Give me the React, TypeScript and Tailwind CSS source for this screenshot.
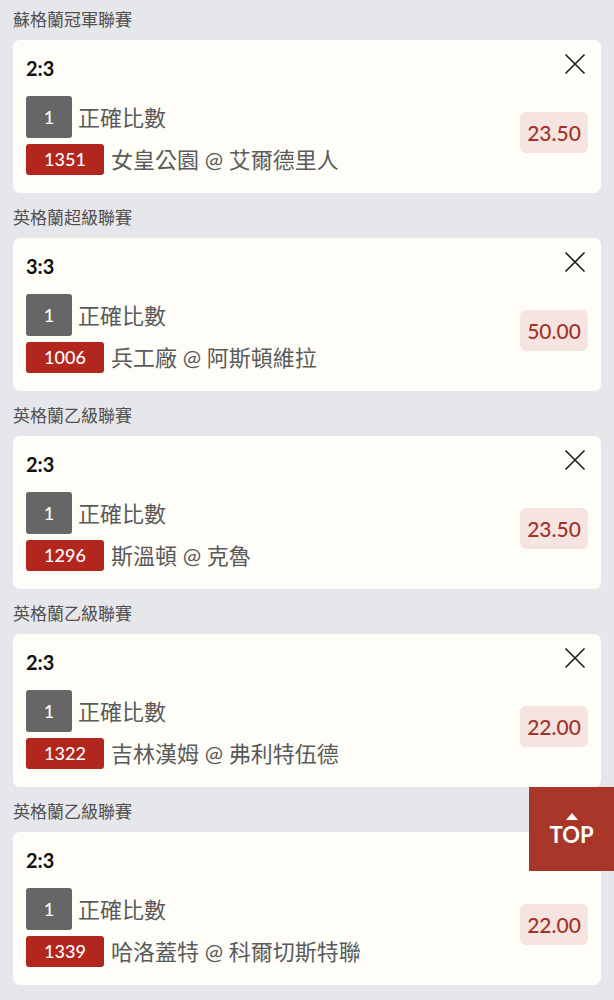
const bets = [
  { league: "蘇格蘭冠軍聯賽", score: "2:3", no: "1351", match: "女皇公園 @ 艾爾德里人", odds: "23.50", close: true },
  { league: "英格蘭超級聯賽", score: "3:3", no: "1006", match: "兵工廠 @ 阿斯頓維拉", odds: "50.00", close: true },
  { league: "英格蘭乙級聯賽", score: "2:3", no: "1296", match: "斯溫頓 @ 克魯", odds: "23.50", close: true },
  { league: "英格蘭乙級聯賽", score: "2:3", no: "1322", match: "吉林漢姆 @ 弗利特伍德", odds: "22.00", close: true },
  { league: "英格蘭乙級聯賽", score: "2:3", no: "1339", match: "哈洛蓋特 @ 科爾切斯特聯", odds: "22.00", close: true },
]

const font = { fontFamily: "Lato, 'Noto Sans CJK TC', sans-serif" }

const CloseIcon = () => (
  <svg width="20" height="20" viewBox="0 0 20 20" fill="none" stroke="#222" strokeWidth="1.7" strokeLinecap="round">
    <path d="M1 1 L19 19 M19 1 L1 19" />
  </svg>
)

const BetCard = ({ bet }: { bet: (typeof bets)[number] }) => (
  <div className="flex flex-col">
    <div className="h-[40px] pt-[10px] pl-[13px] text-[17px] leading-[20px] text-[#505050]">{bet.league}</div>
    <div className="mx-[13px] rounded-[7px] bg-[#fffdf7] px-[13px] pt-[14px] pb-[18px]">
      <div className="flex items-start justify-between">
        <span className="text-[20px] font-bold leading-[28px] text-[#111]">{bet.score}</span>
        {bet.close && (
          <span className="mr-[3px]">
            <CloseIcon />
          </span>
        )}
      </div>
      <div className="mt-[14px] flex items-center justify-between">
        <div className="flex flex-col gap-[6px]">
          <div className="flex items-center gap-[6px]">
            <span className="flex h-[42px] w-[46px] items-center justify-center rounded-[3px] bg-[#666666] text-[18px] font-medium text-white">
              1
            </span>
            <span className="text-[22px] text-[#5a5a5a]">正確比數</span>
          </div>
          <div className="flex items-center gap-[7px]">
            <span className="flex h-[31px] w-[78px] items-center justify-center rounded-[3px] bg-[#b2261e] text-[18px] font-medium text-white">
              {bet.no}
            </span>
            <span className="text-[22px] leading-[30px] text-[#5a5a5a]">{bet.match}</span>
          </div>
        </div>
        <span className="mb-[6px] flex h-[41px] w-[68px] items-center justify-center rounded-[6px] bg-[#f5e4df] text-[21px] font-medium text-[#a2332a]">
          {bet.odds}
        </span>
      </div>
    </div>
  </div>
)

export default function App() {
  return (
    <div className="min-h-screen bg-[#e6e7ea]" style={font}>
      <div className="flex flex-col gap-[5px]">
        {bets.map((bet, i) => (
          <BetCard key={i} bet={bet} />
        ))}
      </div>
      <button className="fixed right-0 top-[787px] flex h-[84px] w-[85px] flex-col items-center justify-center bg-[#a8372a] text-white">
        <svg width="12" height="7" viewBox="0 0 12 7" className="mt-[2px]">
          <path d="M6 0 L12 7 L0 7 Z" fill="#fff" />
        </svg>
        <span className="mt-[2px] text-[22px] font-bold leading-[26px]">TOP</span>
      </button>
    </div>
  )
}
